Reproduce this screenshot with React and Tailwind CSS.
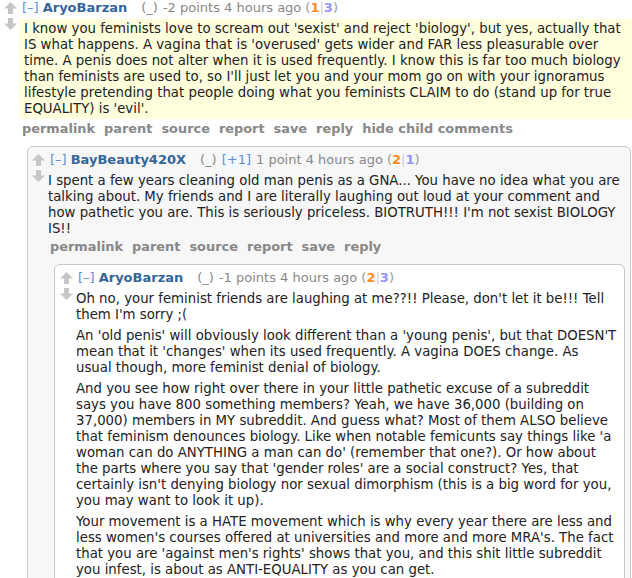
import React from 'react';

const Arrow = ({ down }) => (
  <svg width="13" height="12" viewBox="0 0 13 12" className={down ? 'rotate-180' : ''}>
    <path d="M6.5 0L13 6.5H9V12H4V6.5H0Z" fill="#c6c6c6" />
  </svg>
);

const Tagline = ({ name, plus, score, a, b }) => (
  <div className="flex h-[16px] items-center whitespace-nowrap text-[13px] leading-[16px] text-[#888]">
    <span className="text-[#5c8fca]">[–]</span>
    <span className="ml-[4px] font-bold text-[#336699]">{name}</span>
    <span className="ml-[14px]">(_)</span>
    {plus && <span className="ml-[5px] bg-[#f3f9ff] text-[#5c8fca]">{plus}</span>}
    <span className="ml-[5px]">{score} 4 hours ago</span>
    <span className="ml-[4px] text-[#999]">(</span>
    <span className="font-bold text-[#ff8b24]">{a}</span>
    <span className="text-[#ccc]">|</span>
    <span className="font-bold text-[#9494ff]">{b}</span>
    <span className="text-[#999]">)</span>
  </div>
);

const Buttons = ({ items }) => (
  <div className="flex gap-[9px] pt-[2px] text-[12.9px] font-bold leading-[16px] text-[#888]">
    {items.map((t) => (
      <span key={t}>{t}</span>
    ))}
  </div>
);

const Comment = ({ tag, paras, buttons, highlight, tight }) => {
  let bodyCls = '-ml-[2px] mt-[5px] pr-[8px]';
  if (highlight) bodyCls = '-ml-[3px] mt-[3px] bg-[#ffffdd] py-[2px] pl-[5px] pr-[4px]';
  if (tight) bodyCls = '-ml-[2px] mt-[5px] pr-[6px]';
  return (
    <div className="flex">
      <div className="flex w-[13px] shrink-0 flex-col gap-[4px] pt-[2px]">
        <Arrow />
        <Arrow down />
      </div>
      <div className="ml-[5px] min-w-0 flex-1">
        <Tagline {...tag} />
        <div className={bodyCls}>
          <div className="flex flex-col gap-[5px] text-[13.3px] leading-[16px] text-[#222]">
            {paras.map((p, i) => (
              <p key={i}>{p}</p>
            ))}
          </div>
        </div>
        <Buttons items={buttons} />
      </div>
    </div>
  );
};

export default function App() {
  return (
    <div className="h-[578px] overflow-hidden bg-white font-['DejaVu_Sans',Verdana,sans-serif]">
      <div className="pl-[4px]">
        <Comment
          highlight
          tag={{ name: 'AryoBarzan', score: '-2 points', a: '1', b: '3' }}
          paras={[
            "I know you feminists love to scream out 'sexist' and reject 'biology', but yes, actually that IS what happens. A vagina that is 'overused' gets wider and FAR less pleasurable over time. A penis does not alter when it is used frequently. I know this is far too much biology than feminists are used to, so I'll just let you and your mom go on with your ignoramus lifestyle pretending that people doing what you feminists CLAIM to do (stand up for true EQUALITY) is 'evil'.",
          ]}
          buttons={['permalink', 'parent', 'source', 'report', 'save', 'reply', 'hide child comments']}
        />
      </div>

      <div className="ml-[27px] mr-[1px] mt-[9px] rounded-t-[6px] border border-[#c8c8c8] bg-[#f7f7f8] pl-[4px] pt-[5px]">
        <Comment
          tag={{ name: 'BayBeauty420X', plus: '[+1]', score: '1 point', a: '2', b: '1' }}
          paras={[
            "I spent a few years cleaning old man penis as a GNA... You have no idea what you are talking about. My friends and I are literally laughing out loud at your comment and how pathetic you are. This is seriously priceless. BIOTRUTH!!! I'm not sexist BIOLOGY IS!!",
          ]}
          buttons={['permalink', 'parent', 'source', 'report', 'save', 'reply']}
        />

        <div className="ml-[22px] mr-[5px] mt-[9px] rounded-t-[6px] border border-[#c8c8c8] bg-white pl-[5px] pt-[5px]">
          <Comment
            tight
            tag={{ name: 'AryoBarzan', score: '-1 points', a: '2', b: '3' }}
            paras={[
              "Oh no, your feminist friends are laughing at me??!! Please, don't let it be!!! Tell them I'm sorry ;(",
              "An 'old penis' will obviously look different than a 'young penis', but that DOESN'T mean that it 'changes' when its used frequently. A vagina DOES change. As usual though, more feminist denial of biology.",
              "And you see how right over there in your little pathetic excuse of a subreddit says you have 800 something members? Yeah, we have 36,000 (building on 37,000) members in MY subreddit. And guess what? Most of them ALSO believe that feminism denounces biology. Like when notable femicunts say things like 'a woman can do ANYTHING a man can do' (remember that one?). Or how about the parts where you say that 'gender roles' are a social construct? Yes, that certainly isn't denying biology nor sexual dimorphism (this is a big word for you, you may want to look it up).",
              "Your movement is a HATE movement which is why every year there are less and less women's courses offered at universities and more and more MRA's. The fact that you are 'against men's rights' shows that you, and this shit little subreddit you infest, is about as ANTI-EQUALITY as you can get.",
            ]}
            buttons={['permalink', 'parent', 'source', 'report', 'save', 'reply']}
          />
        </div>
      </div>
    </div>
  );
}
